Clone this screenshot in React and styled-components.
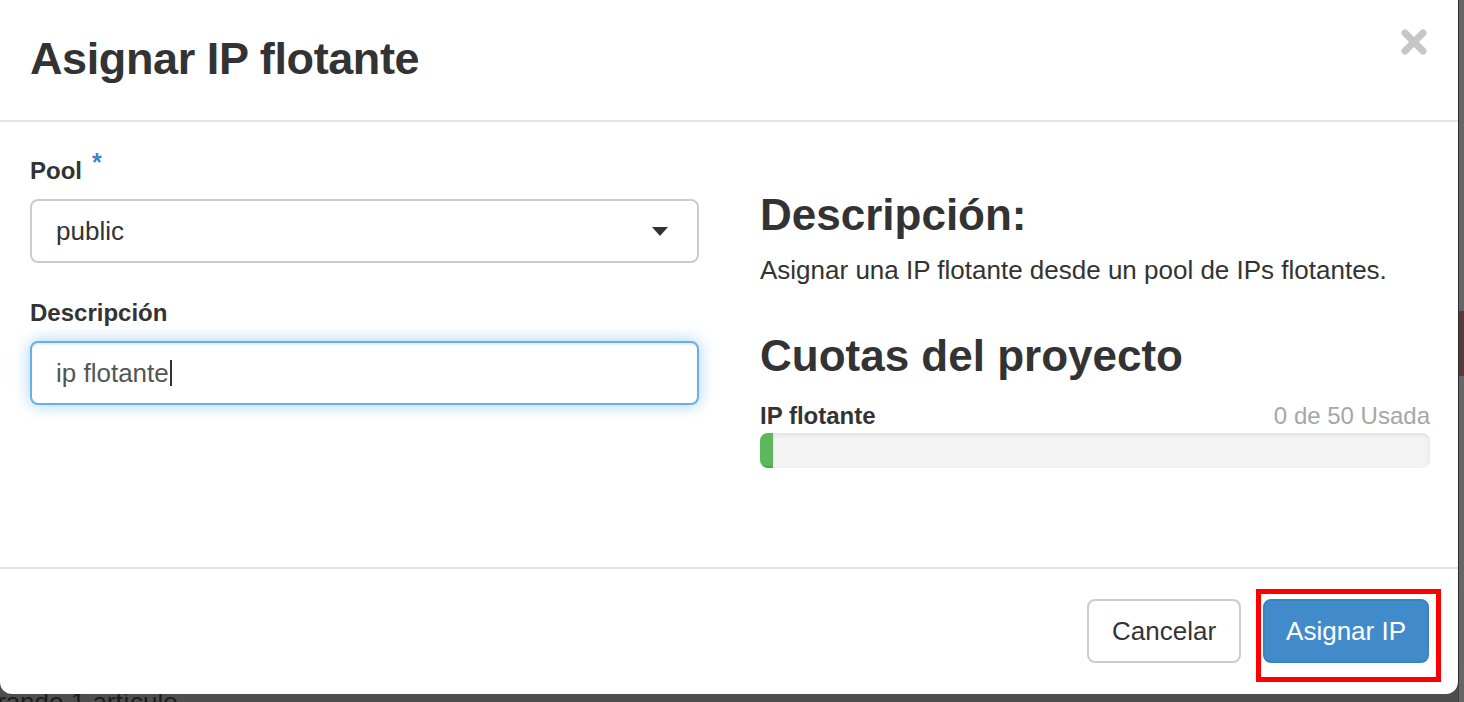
import React from "react"
import styled, { createGlobalStyle } from "styled-components"

const GlobalStyle = createGlobalStyle`
  *, *::before, *::after {
    box-sizing: border-box;
  }
  html, body {
    margin: 0;
    padding: 0;
    overflow: hidden;
    background: #4e4e4e;
  }
  body {
    font-family: "Liberation Sans", Arial, Helvetica, sans-serif;
    color: #333;
  }
`

const quota = { used: 0, total: 50 }

const App = () => {
  const fill = Math.max((quota.used / quota.total) * 100, 1.9)

  return (
    <>
      <GlobalStyle />
      <Scene>
        <Modal>
          <Header>
            <Title>Asignar IP flotante</Title>
            <Close aria-label="Cerrar">
              <svg width="26" height="26" viewBox="0 0 26 26">
                <path d="M4 4 L22 22 M22 4 L4 22" stroke="#c6c6c6" strokeWidth="7" strokeLinecap="round" />
              </svg>
            </Close>
          </Header>

          <Body>
            <Column>
              <Label>
                Pool<Required>*</Required>
              </Label>
              <Select>
                public
                <svg width="16" height="9" viewBox="0 0 16 9">
                  <path d="M0 0 H16 L8 9 Z" fill="#333" />
                </svg>
              </Select>

              <Label $top={33}>Descripción</Label>
              <Input>
                ip flotante<Caret />
              </Input>
            </Column>

            <Column>
              <Heading $top={37}>Descripción:</Heading>
              <Text>Asignar una IP flotante desde un pool de IPs flotantes.</Text>
              <Heading $top={44}>Cuotas del proyecto</Heading>
              <QuotaRow>
                <QuotaName>IP flotante</QuotaName>
                <QuotaUsage>
                  {quota.used} de {quota.total} Usada
                </QuotaUsage>
              </QuotaRow>
              <Progress>
                <ProgressFill style={{ width: `${fill}%` }} />
              </Progress>
            </Column>
          </Body>

          <Footer>
            <Button>Cancelar</Button>
            <Highlight>
              <Button $primary>Asignar IP</Button>
            </Highlight>
          </Footer>
        </Modal>

        <SideStrip>
          <SideBand />
        </SideStrip>

        <BehindText>rando 1 artículo</BehindText>
      </Scene>
    </>
  )
}

const Scene = styled.div`
  width: 1464px;
  height: 702px;
  overflow: hidden;
  display: grid;
  grid-template-columns: 1458px 1fr;
  grid-template-rows: 694px 1fr;
  background: #4e4e4e;
`

const Modal = styled.div`
  position: relative;
  z-index: 1;
  display: flex;
  flex-direction: column;
  background: #fff;
  border-radius: 0 0 12px 12px;
  box-shadow: 1px 0 0 rgba(0, 0, 0, 0.35);
`

const Header = styled.div`
  height: 122px;
  flex: none;
  border-bottom: 2px solid #e5e5e5;
  display: flex;
  justify-content: space-between;
  align-items: flex-start;
  padding: 29px 31px 0 30px;
`

const Title = styled.h4`
  margin: 5px 0 0;
  font-size: 45px;
  line-height: 49px;
  font-weight: 700;
  letter-spacing: -0.4px;
  color: #333;
`

const Close = styled.button`
  border: 0;
  background: none;
  padding: 0;
  width: 26px;
  height: 26px;
  display: flex;
  cursor: pointer;
`

const Body = styled.div`
  flex: 1;
  display: grid;
  grid-template-columns: 669px 1fr;
  column-gap: 61px;
  padding: 32px 28px 0 30px;
  align-items: start;
`

const Column = styled.div`
  display: flex;
  flex-direction: column;
`

const Label = styled.label`
  margin: ${(p) => p.$top || 0}px 0 11px;
  font-size: 24px;
  line-height: 34px;
  font-weight: 700;
  color: #333;
`

const Required = styled.span`
  margin-left: 10px;
  color: #3a87cf;
  font-size: 25px;
  line-height: 0;
  vertical-align: 8px;
`

const Field = styled.div`
  height: 64px;
  border-radius: 8px;
  padding: 0 29px 0 24px;
  display: flex;
  align-items: center;
  font-size: 26px;
  background: #fff;
`

const Select = styled(Field)`
  justify-content: space-between;
  border: 2px solid #cccccc;
  color: #333;
`

const Input = styled(Field)`
  border: 2px solid #66afe9;
  color: #555;
  box-shadow: inset 0 2px 2px rgba(0, 0, 0, 0.075), 0 0 16px rgba(102, 175, 233, 0.6);
`

const Caret = styled.span`
  display: inline-block;
  width: 2px;
  height: 26px;
  margin-left: 1px;
  background: #333;
`

const Heading = styled.h3`
  margin: ${(p) => p.$top}px 0 0;
  font-size: 44px;
  line-height: 48px;
  font-weight: 700;
  color: #333;
`

const Text = styled.p`
  margin: 13px 0 0;
  font-size: 26px;
  line-height: 36px;
  color: #333;
`

const QuotaRow = styled.div`
  margin-top: 19px;
  display: flex;
  justify-content: space-between;
  font-size: 24px;
  line-height: 34px;
`

const QuotaName = styled.strong`
  font-weight: 700;
  color: #333;
`

const QuotaUsage = styled.span`
  color: #a6a6a6;
`

const Progress = styled.div`
  height: 35px;
  border-radius: 8px;
  background: #f3f3f3;
  box-shadow: inset 0 2px 4px rgba(0, 0, 0, 0.08);
  overflow: hidden;
`

const ProgressFill = styled.div`
  height: 100%;
  background: #5cb85c;
  box-shadow: inset 0 -2px 0 rgba(0, 0, 0, 0.12);
`

const Footer = styled.div`
  height: 127px;
  flex: none;
  border-top: 2px solid #e5e5e5;
  display: flex;
  justify-content: flex-end;
  align-items: flex-start;
  gap: 22px;
  padding: 30px 29px 0 0;
`

const Button = styled.button`
  height: 64px;
  padding: 0 ${(p) => (p.$primary ? 21 : 23)}px;
  border-radius: 8px;
  font-family: "Liberation Sans", Arial, Helvetica, sans-serif;
  font-size: 26px;
  cursor: pointer;
  border: 2px solid ${(p) => (p.$primary ? "#3b82c4" : "#cccccc")};
  background: ${(p) => (p.$primary ? "#428bca" : "#fff")};
  color: ${(p) => (p.$primary ? "#fff" : "#333")};
`

const Highlight = styled.div`
  position: relative;
  display: flex;

  &::after {
    content: "";
    position: absolute;
    top: -10px;
    left: -7px;
    right: -12px;
    bottom: -19px;
    border: 5px solid #ff0000;
    pointer-events: none;
  }
`

const SideStrip = styled.div`
  grid-row: 1 / span 2;
  grid-column: 2;
  background: #666;
  border-left: 1px solid #444;
  padding-top: 311px;
`

const SideBand = styled.div`
  height: 65px;
  background: #5b3a3a;
`

const BehindText = styled.div`
  margin: -5px 0 0 -3px;
  font-size: 26px;
  line-height: 26px;
  color: #1c1c1c;
  white-space: nowrap;
`

export default App
